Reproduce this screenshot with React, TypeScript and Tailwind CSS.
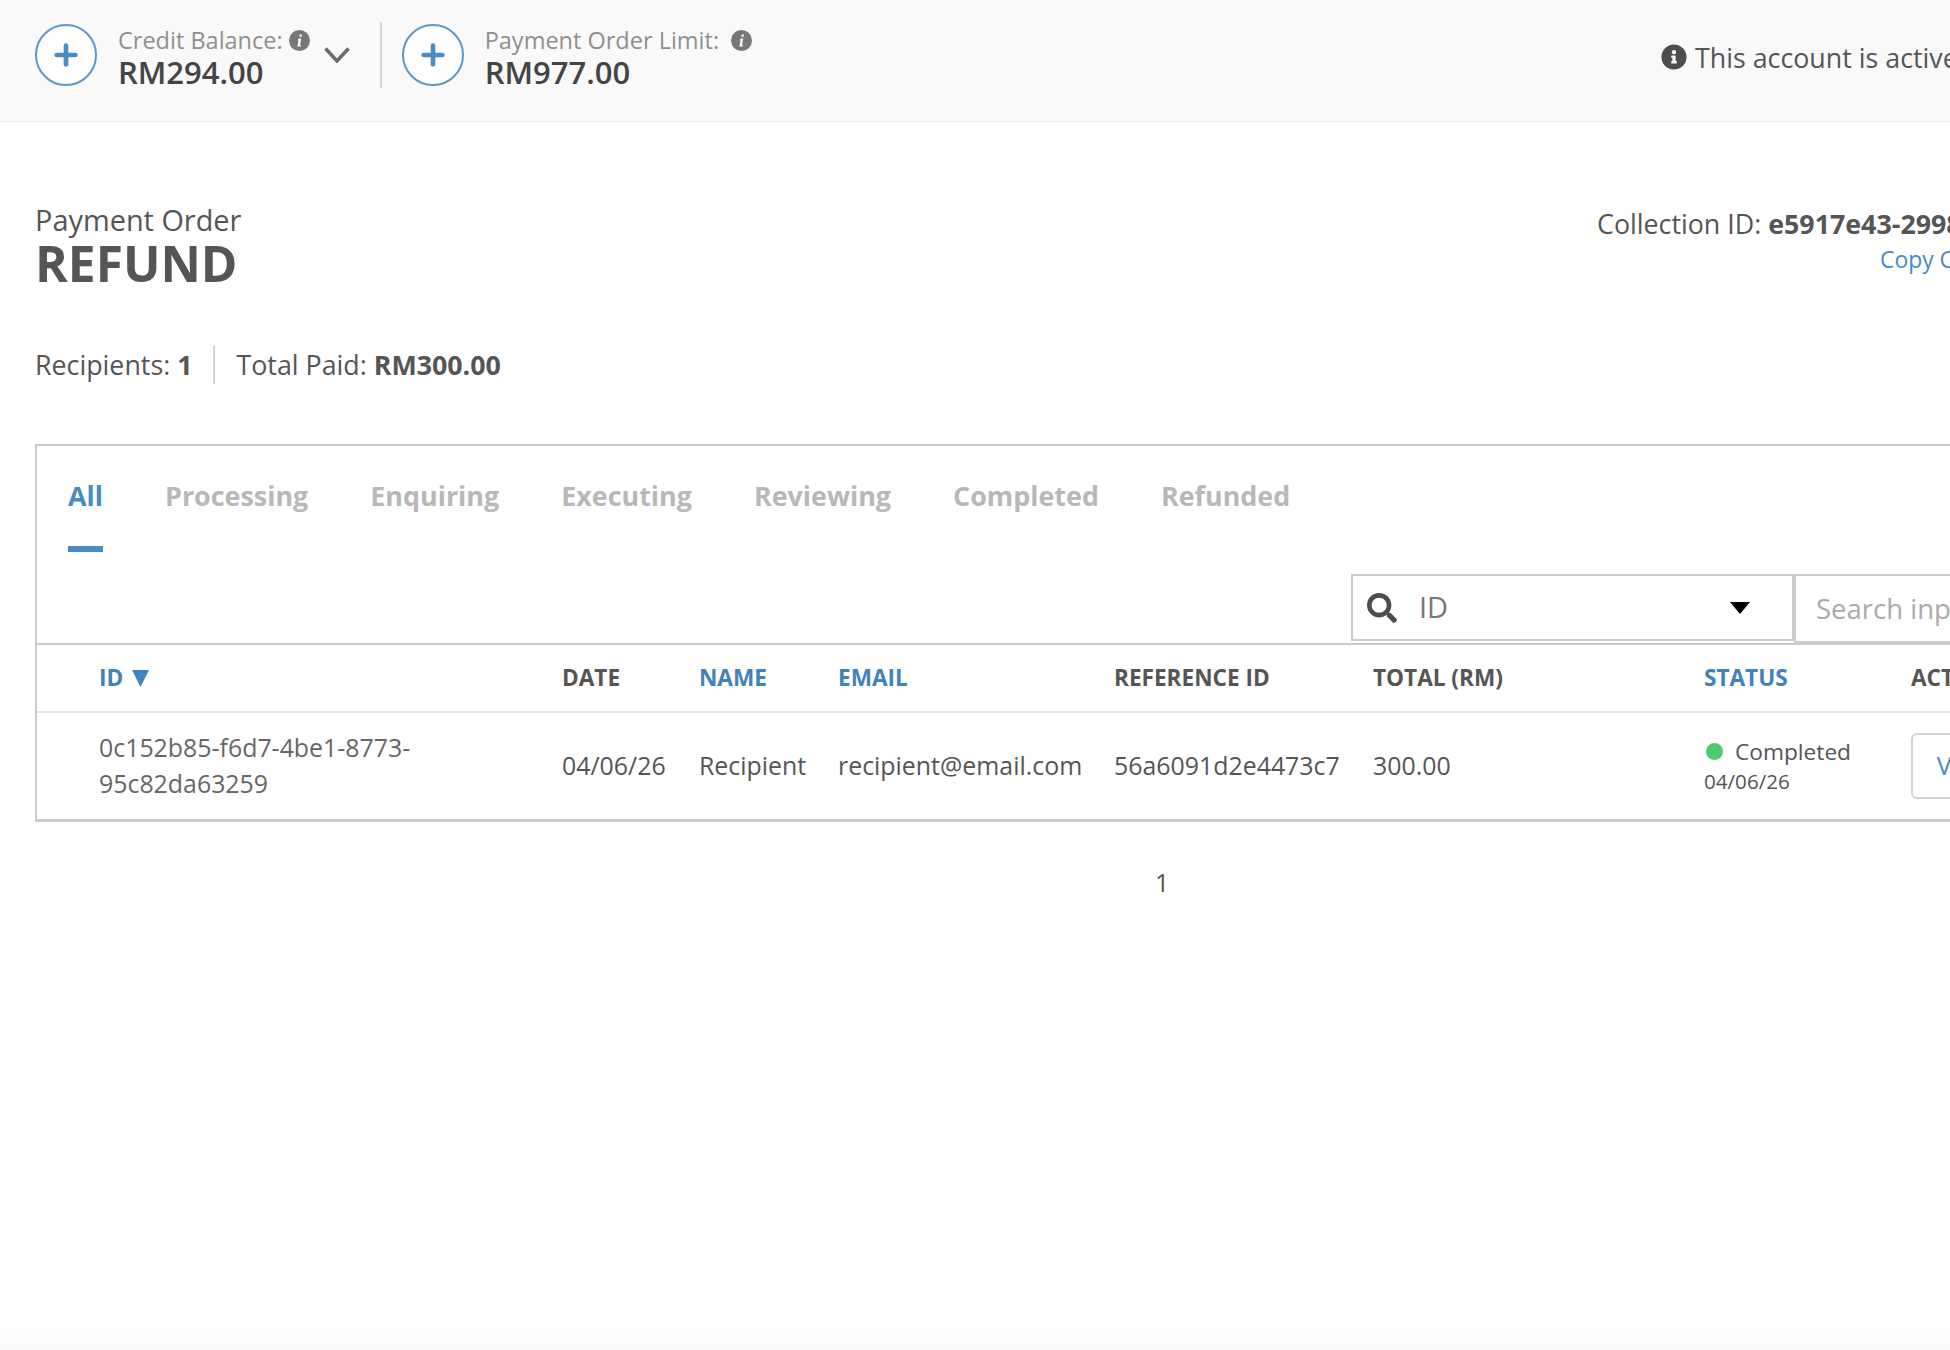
import { Plus } from "lucide-react";
import { FaInfoCircle, FaSearch } from "react-icons/fa";

const tabs = ["Processing", "Enquiring", "Executing", "Reviewing", "Completed", "Refunded"];

function SmallInfo() {
  return (
    <svg viewBox="0 0 20 20" className="h-[21px] w-[21px]">
      <circle cx="10" cy="10" r="10" fill="#777777" />
      <path d="M10.2 4.2h2.2l-.4 2.2H9.8zM9.4 8.2h2.200l-1.100 6h1l-.3 1.600H8l1.100-6H8.200z" fill="#f9f9f9" />
    </svg>
  );
}

function AddCircle() {
  return (
    <button className="flex h-[62px] w-[62px] shrink-0 items-center justify-center rounded-full border-2 border-[#5b97c9] bg-white">
      <Plus className="h-8 w-8 text-[#4a8bc4]" strokeWidth={3.5} />
    </button>
  );
}

function Balance({ label, value, wide }: { label: string; value: string; wide?: boolean }) {
  return (
    <div className="mt-[3px] ml-[21px] flex flex-col">
      <div
        className={
          wide
            ? "flex items-center gap-[12px] text-[23.5px] leading-[26px] whitespace-nowrap text-[#8f8f8f]"
            : "flex items-center gap-[6px] text-[23.5px] leading-[26px] whitespace-nowrap text-[#8f8f8f]"
        }
      >
        {label}
        <SmallInfo />
      </div>
      <div className="text-[31px] leading-[38px] font-semibold text-[#444444]">{value}</div>
    </div>
  );
}

export default function App() {
  return (
    <div className="flex h-[1350px] w-[1950px] flex-col overflow-hidden bg-white font-['Open_Sans',sans-serif] text-[#555555]">
      <div className="w-[2400px] flex-1">
        {/* Top bar */}
        <div className="flex h-[122px] items-start border-b border-[#ececec] bg-[#f9f9f9] pt-[24px] pl-[35px]">
          <div className="flex w-[1626px] shrink-0 items-start">
            <AddCircle />
            <Balance label="Credit Balance:" value="RM294.00" />
            <svg viewBox="0 0 26 16" fill="none" className="mt-[23px] ml-[14px] h-[16px] w-[26px] shrink-0">
              <path d="M1.500 1.500 13 14 24.500 1.500" stroke="#6b6b6b" strokeWidth="3.500" />
            </svg>
            <div className="-mt-[2px] mr-[20px] ml-[30px] h-[66px] w-[2px] shrink-0 bg-[#d4d4d4]" />
            <AddCircle />
            <Balance label="Payment Order Limit:" value="RM977.00" wide />
          </div>
          <div className="mt-[16px] flex items-center gap-[8px] text-[26.8px] leading-[36px] whitespace-nowrap">
            <FaInfoCircle className="-mt-[3px] h-[26px] w-[26px] text-[#4d4d4d]" />
            This account is active
          </div>
        </div>

        {/* Title */}
        <div className="flex items-start pt-[82px] pl-[35px]">
          <div className="w-[1562px] shrink-0">
            <div className="text-[28.900px] leading-[32px]">Payment Order</div>
            <div className="text-[49.700px] leading-[54px] font-bold">REFUND</div>
          </div>
          <div className="mt-[2px] text-[26.8px] whitespace-nowrap">
            <div className="leading-[36px]">
              Collection ID: <b>e5917e43-2998-4a1b</b>
            </div>
            <div className="pl-[283px] text-[22.900px] leading-[36px] text-[#4a8bc4]">Copy Collection ID</div>
          </div>
        </div>

        <div className="mt-[56px] flex items-center pl-[35px] text-[26.800px] leading-[38px]">
          <span>
            Recipients: <b>1</b>
          </span>
          <div className="mx-[21px] h-[38px] w-[2px] bg-[#d4d4d4]" />
          <span>
            Total Paid: <b>RM300.00</b>
          </span>
        </div>

        {/* Table card */}
        <div className="mt-[60px] ml-[35px] w-[2300px] border-2 border-b-[3px] border-[#cccccc]">
          <div className="flex pt-[29px] pl-[31px] text-[26.900px] font-bold text-[#b8b8b8]">
            <div className="flex flex-col">
              <span className="leading-[42px] text-[#4a8bc4]">All</span>
              <span className="mt-[29px] h-[6px] w-[35px] bg-[#4a8bc4]" />
            </div>
            {tabs.map((t) => (
              <span key={t} className="ml-[62px] leading-[42px]">
                {t}
              </span>
            ))}
          </div>
          <div className="flex h-[91px] items-start pt-[22px] pl-[1314px]">
            <div className="flex h-[67px] w-[443px] items-center border-2 border-[#cccccc] pr-[42px] pl-[14px]">
              <FaSearch className="h-[30px] w-[30px] text-[#4d4d4d]" />
              <span className="-mt-[2px] ml-[22px] text-[29px] text-[#777777]">ID</span>
              <svg viewBox="0 0 20 12" className="ml-auto h-[12px] w-[20px]">
                <path d="M0 0h20L10 12z" fill="#000000" />
              </svg>
            </div>
            <div className="flex h-[71px] w-[400px] items-center rounded-bl-[3px] border-2 border-b-4 border-[#cccccc] pl-[20px] text-[27.500px] text-[#aaaaaa]">
              Search input
            </div>
          </div>

          <div className="grid grid-cols-[463px_137px_139px_276px_259px_331px_207px_1fr] pl-[62px]">
            <div className="col-span-8 -ml-[62px] h-[2px] bg-[#cccccc]" />
            <div className="flex h-[66px] items-center gap-[9px] text-[22.600px] font-bold text-[#3f83ba]">
              ID
              <svg viewBox="0 0 14 14" className="h-[17px] w-[17px]">
                <path d="M0 0h14L7 14z" fill="#3f83ba" />
              </svg>
            </div>
            <div className="flex h-[66px] items-center text-[22.600px] font-bold">DATE</div>
            <div className="flex h-[66px] items-center text-[22.600px] font-bold text-[#3f83ba]">NAME</div>
            <div className="flex h-[66px] items-center text-[22.600px] font-bold text-[#3f83ba]">EMAIL</div>
            <div className="flex h-[66px] items-center text-[22.600px] font-bold">REFERENCE ID</div>
            <div className="flex h-[66px] items-center text-[22.600px] font-bold">TOTAL (RM)</div>
            <div className="flex h-[66px] items-center text-[22.600px] font-bold text-[#3f83ba]">STATUS</div>
            <div className="flex h-[66px] items-center text-[22.600px] font-bold">ACTION</div>
            <div className="col-span-8 -ml-[62px] h-[2px] bg-[#e2e2e2]" />
            <div className="flex h-[106px] items-center pb-[2px] text-[24.900px] leading-[36px] text-[#666666]">
              <span className="w-[340px]">0c152b85-f6d7-4be1-8773-95c82da63259</span>
            </div>
            <div className="flex items-center pb-[1px] text-[24.900px]">04/06/26</div>
            <div className="flex items-center pb-[1px] text-[24.900px]">Recipient</div>
            <div className="flex items-center pb-[1px] text-[24.900px]">recipient@email.com</div>
            <div className="flex items-center pb-[1px] text-[24.900px]">56a6091d2e4473c7</div>
            <div className="flex items-center pb-[1px] text-[24.900px]">300.00</div>
            <div className="flex flex-col justify-center pb-[1px]">
              <div className="flex items-center text-[22.700px] leading-[30px]">
                <span className="mr-[12px] ml-[2px] h-[17px] w-[17px] rounded-full bg-[#4fc96f]" />
                Completed
              </div>
              <div className="text-[20.600px] leading-[28px]">04/06/26</div>
            </div>
            <div className="flex items-center">
              <button className="h-[66px] w-[106px] rounded-[6px] border-2 border-[#d4d4d4] text-[24.900px] text-[#4a8bc4]">
                View
              </button>
            </div>
          </div>
        </div>

        {/* Pagination */}
        <div className="mt-[42px] pl-[1155px] text-[24.900px]">1</div>
      </div>
      <div className="h-[40px] bg-linear-to-b from-white to-[#fafafa]" />
    </div>
  );
}
